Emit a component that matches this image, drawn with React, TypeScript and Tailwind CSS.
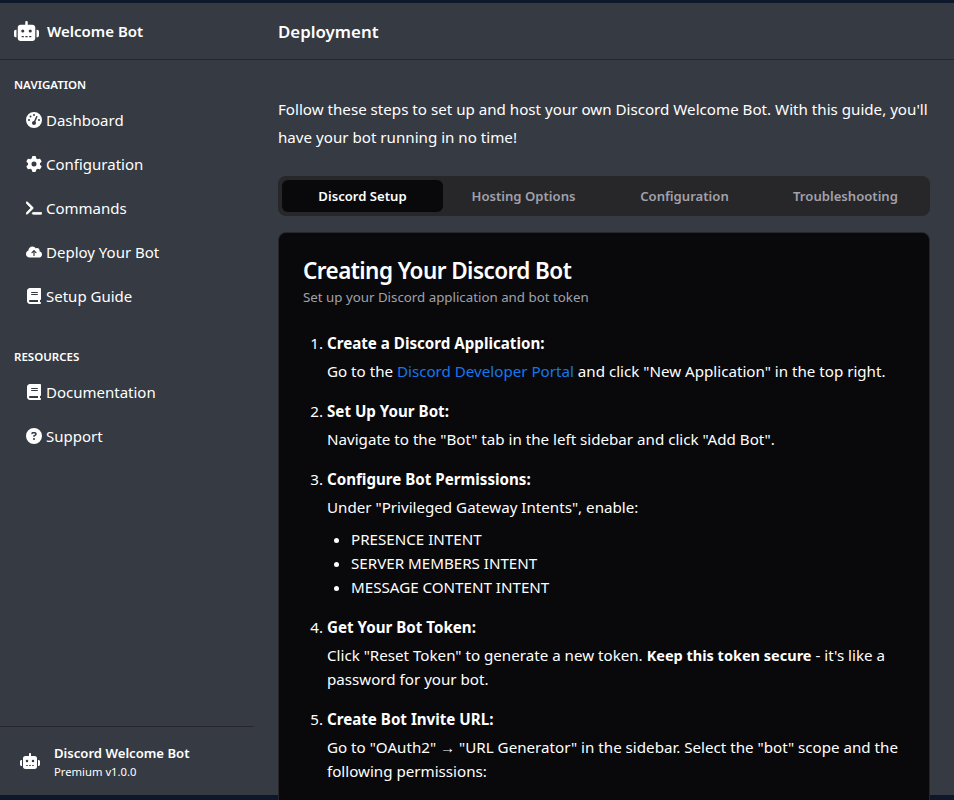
import { FaBook, FaCircleQuestion, FaCloudArrowUp, FaGaugeHigh, FaGear, FaRobot, FaTerminal } from "react-icons/fa6";
import type { IconType } from "react-icons";

interface NavItem {
    label: string;
    icon: IconType;
}

// the reference draws this one heavier than the stock glyph
const HeavyTerminal: IconType = (props) => <FaTerminal {...props} strokeWidth={28} />;

const navigation: NavItem[] = [
    { label: "Dashboard", icon: FaGaugeHigh },
    { label: "Configuration", icon: FaGear },
    { label: "Commands", icon: HeavyTerminal },
    { label: "Deploy Your Bot", icon: FaCloudArrowUp },
    { label: "Setup Guide", icon: FaBook },
];

const resources: NavItem[] = [
    { label: "Documentation", icon: FaBook },
    { label: "Support", icon: FaCircleQuestion },
];

const tabs = ["Discord Setup", "Hosting Options", "Configuration", "Troubleshooting"];

function NavLink({ label, icon: Icon }: NavItem) {
    return (
        <a href="#" className="flex h-11 items-center pl-[26px] text-white">
            <span className="w-5 shrink-0">
                <Icon className="h-4 w-auto" />
            </span>
            <span>{label}</span>
        </a>
    );
}

function App() {
    return (
        <div className="h-screen overflow-hidden bg-[#0f172a] pt-[3px] pb-[5px] font-['Noto_Sans',sans-serif] text-[15px] leading-6 text-white">
            <div className="flex h-full bg-[#363a43]">
                {/* Sidebar */}
                <aside className="flex w-[254px] shrink-0 flex-col">
                    <div className="flex h-[57px] items-center gap-2 border-b border-[#26282e] pl-[14px]">
                        <FaRobot className="h-5 w-[25px]" />
                        <span className="font-semibold">Welcome Bot</span>
                    </div>
                    <div className="flex-1 pt-4">
                        <h3 className="pl-[14px] text-[11.5px] leading-[18px] font-semibold">NAVIGATION</h3>
                        <nav className="mt-1 mb-[30px]">
                            {navigation.map((item) => (
                                <NavLink key={item.label} {...item} />
                            ))}
                        </nav>
                        <h3 className="pl-[14px] text-[11.5px] leading-[18px] font-semibold">RESOURCES</h3>
                        <nav className="mt-1">
                            {resources.map((item) => (
                                <NavLink key={item.label} {...item} />
                            ))}
                        </nav>
                    </div>
                    <div className="flex h-[69px] items-center gap-[14px] border-t border-[#26282e] pl-5">
                        <FaRobot className="h-4 w-5" />
                        <div className="pt-px">
                            <p className="text-[13.125px] leading-5 font-semibold">Discord Welcome Bot</p>
                            <p className="text-[11.25px] leading-[18px]">Premium v1.0.0</p>
                        </div>
                    </div>
                </aside>

                {/* Main */}
                <main className="min-w-0 flex-1">
                    <div className="flex h-[57px] items-center border-b border-[#26282e] pt-0.5 pl-6">
                        <h1 className="text-[16.875px] font-semibold">Deployment</h1>
                    </div>
                    <div className="px-6 pt-[35px] text-[15.15px]">
                        <p className="leading-7">
                            Follow these steps to set up and host your own Discord Welcome Bot. With this guide, you'll have your bot running in no time!
                        </p>

                        <div className="mt-[25px] grid grid-cols-4 rounded-lg bg-[#27272a] p-1">
                            {tabs.map((tab, i) => (
                                <button
                                    key={tab}
                                    className={i === 0
                                        ? "h-8 rounded-md bg-[#09090b] text-[13.125px] font-semibold text-white"
                                        : "h-8 rounded-md text-[13.125px] font-semibold text-[#a1a1aa]"}
                                >
                                    {tab}
                                </button>
                            ))}
                        </div>

                        <div className="mt-4 rounded-lg border border-[#27272a] bg-[#09090b] p-6">
                            <h2 className="text-[22.5px] leading-7 font-semibold tracking-tight">Creating Your Discord Bot</h2>
                            <p className="mt-0.5 text-[13.3px] leading-5 text-[#a1a1aa]">Set up your Discord application and bot token</p>

                            <ol className="mt-6 list-decimal space-y-4 pl-6">
                                <li>
                                    <strong className="mb-1 block font-bold">Create a Discord Application:</strong>
                                    Go to the <a href="#" className="text-[#1477ed]">Discord Developer Portal</a> and click "New Application" in the top right.
                                </li>
                                <li>
                                    <strong className="mb-1 block font-bold">Set Up Your Bot:</strong>
                                    Navigate to the "Bot" tab in the left sidebar and click "Add Bot".
                                </li>
                                <li>
                                    <strong className="mb-1 block font-bold">Configure Bot Permissions:</strong>
                                    Under "Privileged Gateway Intents", enable:
                                    <ul className="mt-2 list-disc pl-6">
                                        <li>PRESENCE INTENT</li>
                                        <li>SERVER MEMBERS INTENT</li>
                                        <li>MESSAGE CONTENT INTENT</li>
                                    </ul>
                                </li>
                                <li>
                                    <strong className="mb-1 block font-bold">Get Your Bot Token:</strong>
                                    Click "Reset Token" to generate a new token. <strong className="text-[14.5px] font-bold">Keep this token secure</strong> - it's like a password for your bot.
                                </li>
                                <li>
                                    <strong className="mb-1 block font-bold">Create Bot Invite URL:</strong>
                                    Go to "OAuth2" → "URL Generator" in the sidebar. Select the "bot" scope and the following permissions:
                                </li>
                            </ol>
                        </div>
                    </div>
                </main>
            </div>
        </div>
    );
}

export default App;
